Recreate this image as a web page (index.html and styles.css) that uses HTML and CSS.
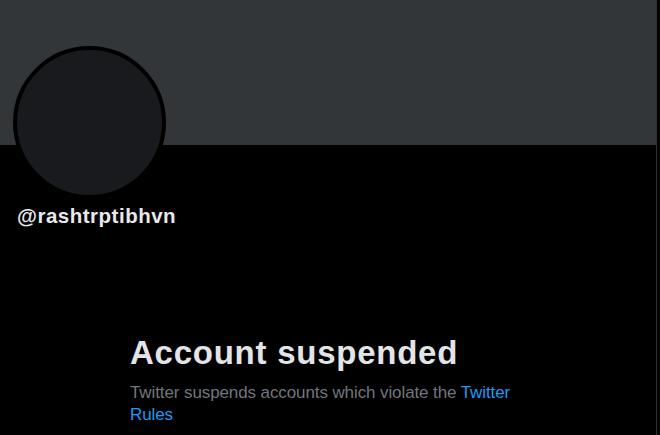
FILE: index.html
```html
<!DOCTYPE html>
<html>
<head>
<meta charset="utf-8">
<link rel="stylesheet" href="styles.css">
</head>
<body>
<main class="column">
  <div class="banner"></div>
  <section class="profile">
    <div class="avatar"></div>
    <div class="handle">@rashtrptibhvn</div>
  </section>
  <section class="notice">
    <h1 class="notice-title">Account suspended</h1>
    <p class="notice-text">Twitter suspends accounts which violate the <a class="link" href="#">Twitter Rules</a></p>
  </section>
</main>
</body>
</html>
```

FILE: styles.css
```css
html, body {
  margin: 0;
  padding: 0;
  background: #000;
  height: 100%;
  overflow: hidden;
}
body {
  font-family: "Liberation Sans", Arial, sans-serif;
  color: #e7e9ea;
}
.column {
  width: 656px;
  min-height: 100%;
  border-right: 1px solid #2f3336;
  display: flex;
  flex-direction: column;
}
.banner {
  height: 145px;
  flex: none;
  background: #333639;
}
.profile {
  display: flex;
  flex-direction: column;
  padding-left: 13px;
}
.avatar {
  width: 145px;
  height: 145px;
  border: 4px solid #000;
  border-radius: 50%;
  background: #181a1e;
  margin-top: -99px;
}
.handle {
  margin-top: 5px;
  padding-left: 4px;
  font-weight: 700;
  font-size: 20.5px;
  letter-spacing: 0.5px;
  line-height: 24px;
}
.notice {
  padding: 105px 0 0 130px;
  width: 400px;
}
.notice-title {
  margin: 0;
  font-size: 33px;
  line-height: 40px;
  font-weight: 700;
  letter-spacing: 0.75px;
  color: #e2e4e5;
}
.notice-text {
  margin: 9px 0 0;
  font-size: 17px;
  line-height: 21.5px;
  letter-spacing: -0.1px;
  color: #71767b;
}
.link {
  color: #1d9bf0;
  text-decoration: none;
}
```
